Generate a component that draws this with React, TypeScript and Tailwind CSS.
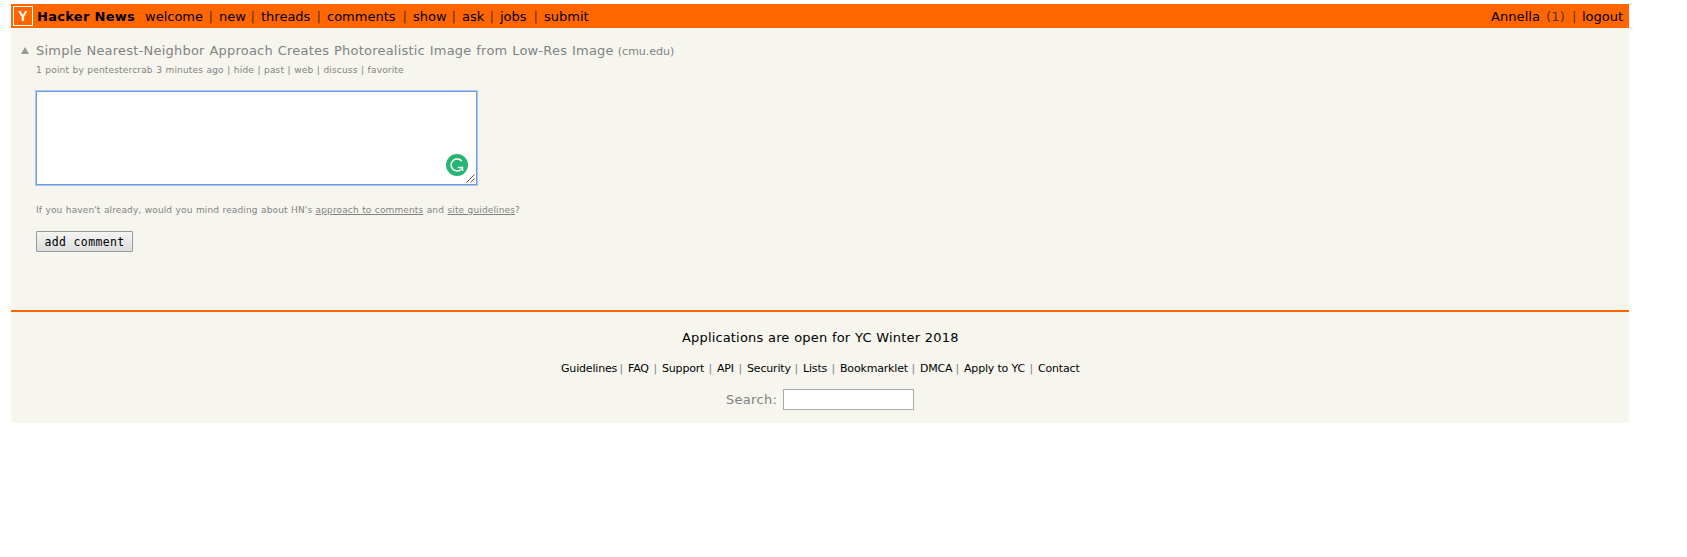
import React from "react";

const navLinks = [
  { label: "welcome", cell: "w-[74px]" },
  { label: "new", cell: "w-[42px]" },
  { label: "threads", cell: "w-[66px]" },
  { label: "comments", cell: "w-[86px]" },
  { label: "show", cell: "w-[49px]" },
  { label: "ask", cell: "w-[38px]" },
  { label: "jobs", cell: "w-[44px]" },
];

const footerLinks = [
  { label: "Guidelines", cell: "w-[67px]" },
  { label: "FAQ", cell: "w-[34px]" },
  { label: "Support", cell: "w-[55px]" },
  { label: "API", cell: "w-[30px]" },
  { label: "Security", cell: "w-[56px]" },
  { label: "Lists", cell: "w-[37px]" },
  { label: "Bookmarklet", cell: "w-[80px]" },
  { label: "DMCA", cell: "w-[44px]" },
  { label: "Apply to YC", cell: "w-[74px]" },
];

function Header() {
  return (
    <header className="flex h-6 items-center bg-[#ff6600] pl-[2px] pr-[6px] text-[13px] leading-6 text-black">
      <a className="flex size-5 shrink-0 items-center justify-center border border-white font-['Liberation_Sans'] text-[14px] font-bold leading-none text-white">
        Y
      </a>
      <b className="ml-[4px] w-[108px] shrink-0 pt-[2px] tracking-[0.3px]">Hacker News</b>
      <nav className="flex pt-[2px]">
        {navLinks.map((item) => (
          <span key={item.label} className={`flex shrink-0 justify-between ${item.cell}`}>
            <a>{item.label}</a>
            <span className="mr-[6px] text-[#222222]/80">|</span>
          </span>
        ))}
        <a>submit</a>
      </nav>
      <div className="ml-auto flex pt-[2px]">
        <a className="w-[55px] tracking-[0.1px]">Annella</a>
        <span className="w-[26px] tracking-[0.3px] text-[#222222]/80">(1)</span>
        <span className="w-[10px] text-[#222222]/80">|</span>
        <a>logout</a>
      </div>
    </header>
  );
}

function CommentBox() {
  return (
    <div className="relative mt-[14px] h-[94px] w-[441px] border border-[#6f9ae0] bg-white shadow-[0_0_0_1px_#a9c6f3]">
      <svg className="absolute bottom-[8px] right-[8px] size-[22px]" viewBox="0 0 22 22" fill="none">
        <circle cx="11" cy="11" r="11" fill="#27b573" />
        <path
          d="M15.9 7.3A6 6 0 1 0 14.6 15.8M11.8 13.4H16.4V17"
          stroke="white"
          strokeWidth="1.5"
        />
        <path d="M13.4 13H17.1V17Z" fill="white" />
      </svg>
      <svg className="absolute bottom-[1px] right-[1px] size-[9px]" viewBox="0 0 9 9" fill="none">
        <path d="M0.5 8.5L8.5 0.5M4.5 8.5L8.5 4.5" stroke="#555" />
      </svg>
    </div>
  );
}

function Story() {
  return (
    <main className="h-[282px] pl-[25px] pt-[13px] text-[#828282]">
      <div className="-ml-[15px] flex h-[20px] items-center">
        <svg className="mb-[2px] mr-[7px] h-[7px] w-[8px] shrink-0" viewBox="0 0 8 7">
          <path d="M4 0L8 7H0Z" fill="#999" />
        </svg>
        <a className="whitespace-nowrap text-[13px] leading-5 tracking-[0.22px] [word-spacing:0.4px]">
          Simple Nearest-Neighbor Approach Creates Photorealistic Image from Low-Res Image
        </a>
        <span className="ml-[4px] pt-px text-[11px] leading-5">(cmu.edu)</span>
      </div>
      <p className="mt-[2px] whitespace-nowrap text-[9px] leading-[14px] tracking-[0.17px] [word-spacing:0.4px]">
        1 point by pentestercrab 3 minutes ago | hide | past | web | discuss | favorite
      </p>
      <CommentBox />
      <p className="mt-[18px] whitespace-nowrap text-[9px] leading-[14px] tracking-[0.13px] [word-spacing:0.4px]">
        If you haven't already, would you mind reading about HN's <u>approach to comments</u> and{" "}
        <u>site guidelines</u>?
      </p>
      <button className="mt-[14px] block h-[21px] w-[97px] rounded-[1px] border border-[#999] bg-linear-to-b from-[#f5f5f5] to-[#dddddd] pt-px font-['DejaVu_Sans_Mono',monospace] text-[11.5px] leading-[18px] tracking-[0.35px] text-black">
        add comment
      </button>
    </main>
  );
}

function Footer() {
  return (
    <footer className="h-[113px] border-t-2 border-[#ff6600] pt-[16px]">
      <p className="ml-[671px] text-[13px] leading-5 tracking-[0.16px] text-black [word-spacing:0.4px]">
        Applications are open for YC Winter 2018
      </p>
      <div className="ml-[550px] mt-[12px] flex whitespace-nowrap text-[11px] leading-[18px] tracking-[-0.18px] text-black">
        {footerLinks.map((item) => (
          <span key={item.label} className={`flex shrink-0 justify-between ${item.cell}`}>
            <a>{item.label}</a>
            <span className="mr-[5px] text-[#828282]">|</span>
          </span>
        ))}
        <a>Contact</a>
      </div>
      <label className="ml-[715px] mt-[11px] flex items-center text-[13px] leading-5 text-[#828282]">
        <span className="w-[57px] pt-px tracking-[0.3px]">Search:</span>
        <input className="h-[21px] w-[131px] border border-[#a9a9a9] bg-white outline-none" />
      </label>
    </footer>
  );
}

export default function App() {
  return (
    <div className="h-[557px] bg-white pl-[11px] pt-1 font-['DejaVu_Sans',sans-serif]">
      <div className="w-[1618px] bg-[#f6f6ef]">
        <Header />
        <Story />
        <Footer />
      </div>
    </div>
  );
}
